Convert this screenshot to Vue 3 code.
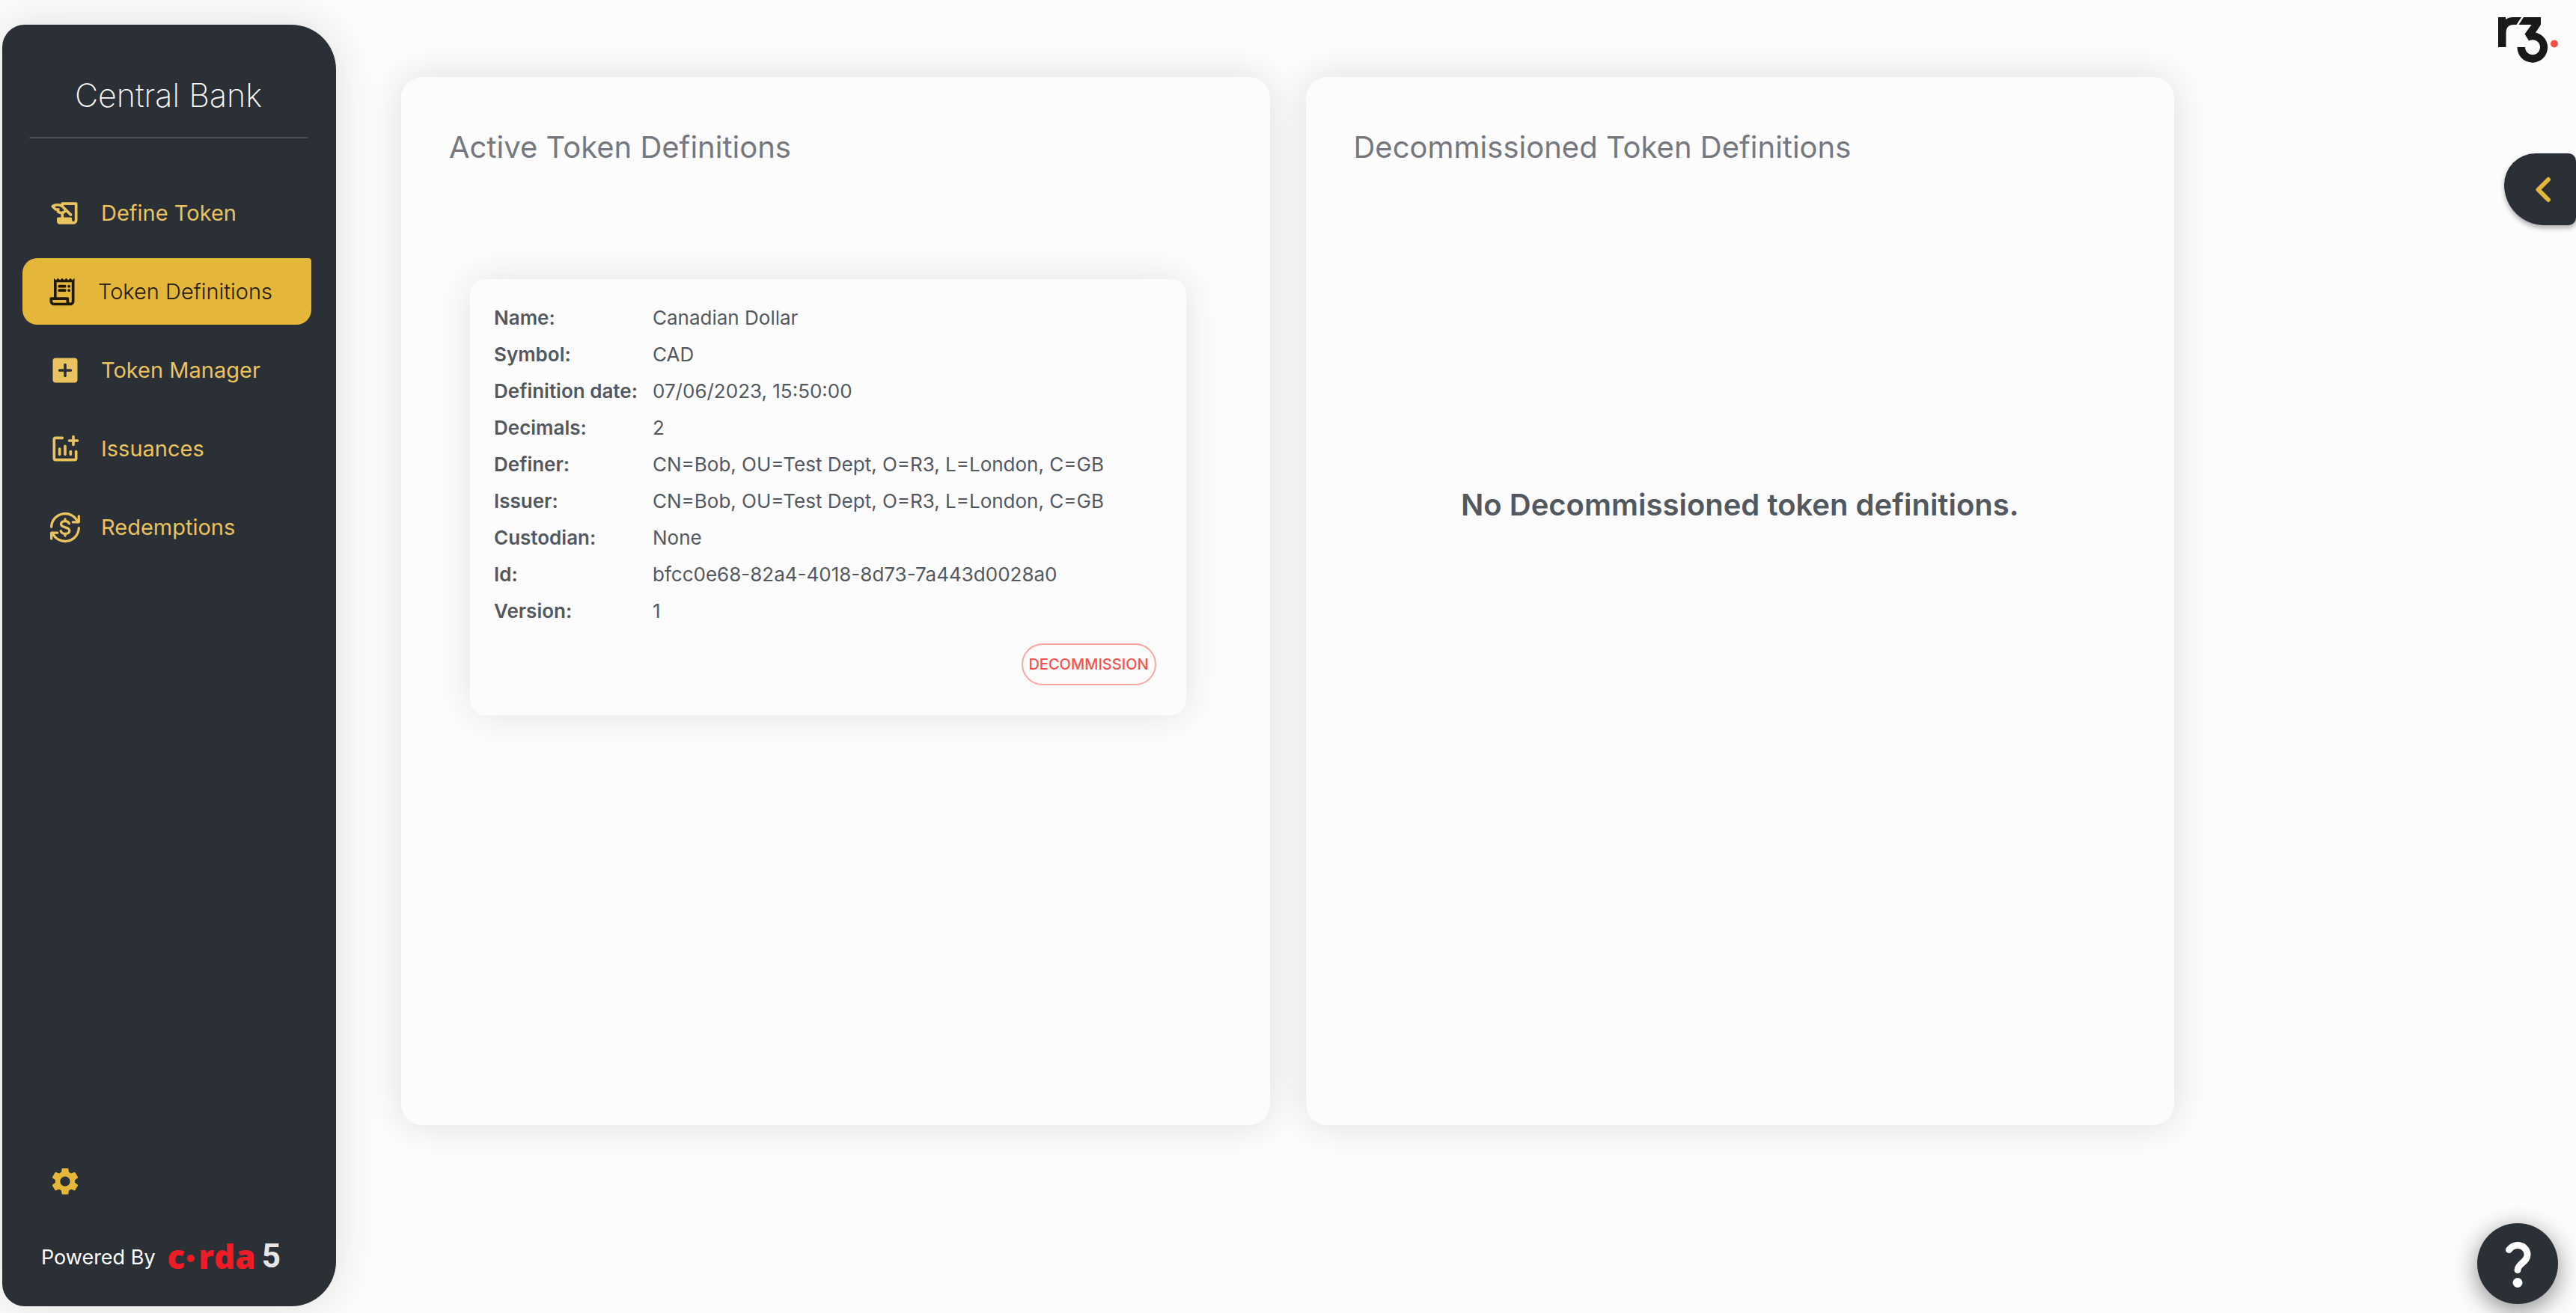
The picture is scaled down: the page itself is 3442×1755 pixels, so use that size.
<script setup>
const navItems = [
  { label: 'Define Token', icon: 'define' },
  { label: 'Token Definitions', icon: 'receipt', active: true },
  { label: 'Token Manager', icon: 'add' },
  { label: 'Issuances', icon: 'chart' },
  { label: 'Redemptions', icon: 'exchange' },
]

const token = [
  ['Name:', 'Canadian Dollar'],
  ['Symbol:', 'CAD'],
  ['Definition date:', '07/06/2023, 15:50:00'],
  ['Decimals:', '2'],
  ['Definer:', 'CN=Bob, OU=Test Dept, O=R3, L=London, C=GB'],
  ['Issuer:', 'CN=Bob, OU=Test Dept, O=R3, L=London, C=GB'],
  ['Custodian:', 'None'],
  ['Id:', 'bfcc0e68-82a4-4018-8d73-7a443d0028a0'],
  ['Version:', '1'],
]
</script>

<template>
  <div class="page">
    <aside class="sidebar">
      <h1 class="brand">Central Bank</h1>
      <nav class="nav">
        <a
          v-for="item in navItems"
          :key="item.label"
          href="#"
          class="nav-link"
          :class="{ active: item.active }"
          :aria-current="item.active ? 'page' : undefined"
        >
          <svg class="icon" viewBox="0 0 24 24" aria-hidden="true">
            <path
              v-if="item.icon === 'define'"
              fill="currentColor"
              d="M9 5v.38c-.83-.33-1.72-.5-2.61-.5-1.42 0-2.84.43-4.05 1.29-.51.36-.58 1.09-.14 1.54l2.57 2.56h1.11v1.11c.86.86 1.98 1.31 3.11 1.36V15H7c-.55 0-1 .45-1 1v2c0 1.1.9 2 2 2h10c1.66 0 3-1.34 3-3V5c0-.55-.45-1-1-1H10c-.55 0-1 .45-1 1zm-1.11 5.41V8.26H5.61L4.57 7.22a5.07 5.07 0 0 1 1.82-.34c1.34 0 2.59.52 3.54 1.46l1.41 1.41-.2.2c-.51.51-1.19.8-1.92.8-.47 0-.93-.12-1.33-.34zM19 17c0 .55-.45 1-1 1s-1-.45-1-1v-1c0-.55-.45-1-1-1h-5v-2.59c.57-.23 1.1-.57 1.56-1.03l.2-.2L15.59 14H17v-1.41l-6-5.97V6h8v11z"
            />
            <g v-else-if="item.icon === 'receipt'" fill="currentColor">
              <path
                d="M19.5 3.5 18 2l-1.5 1.5L15 2l-1.5 1.5L12 2l-1.5 1.5L9 2 7.5 3.5 6 2v14H4c-.55 0-1 .45-1 1v2c0 1.66 1.34 3 3 3h12c1.66 0 3-1.34 3-3V2l-1.5 1.5zM15 20H6c-.55 0-1-.45-1-1v-1h10v2zm4-1c0 .55-.45 1-1 1s-1-.45-1-1v-2c0-.55-.45-1-1-1H8V5h11v14z"
              />
              <rect x="9" y="7" width="6" height="2" rx="1" />
              <rect x="16" y="7" width="2" height="2" rx="1" />
              <rect x="9" y="10" width="6" height="2" rx="1" />
              <rect x="16" y="10" width="2" height="2" rx="1" />
            </g>
            <path
              v-else-if="item.icon === 'add'"
              fill="currentColor"
              d="M19 3H5c-1.11 0-2 .9-2 2v14c0 1.1.89 2 2 2h14c1.1 0 2-.9 2-2V5c0-1.1-.9-2-2-2zm-3 10h-3v3c0 .55-.45 1-1 1s-1-.45-1-1v-3H8c-.55 0-1-.45-1-1s.45-1 1-1h3V8c0-.55.45-1 1-1s1 .45 1 1v3h3c.55 0 1 .45 1 1s-.45 1-1 1z"
            />
            <g
              v-else-if="item.icon === 'chart'"
              fill="none"
              stroke="currentColor"
              stroke-width="2"
              stroke-linecap="round"
            >
              <path d="M10 4H5a1 1 0 0 0-1 1v14a1 1 0 0 0 1 1h14a1 1 0 0 0 1-1v-5" />
              <path d="M8 12v4M12 10v6M16 14v2M18 3v6M15 6h6" />
            </g>
            <g
              v-else
              fill="none"
              stroke="currentColor"
              stroke-width="1.8"
              stroke-linecap="round"
              stroke-linejoin="round"
            >
              <path d="M2 11.6A10 10 0 0 1 21.2 8M22 12.4A10 10 0 0 1 2.8 16" />
              <path d="M22 3.8V8.1H17.6M2 20.2V15.9H6.4" />
              <path
                d="M15 9.2c-.4-1.1-1.5-1.8-3-1.8-1.7 0-3 .9-3 2.2 0 3 6.2 1.7 6.2 4.8 0 1.3-1.4 2.2-3.2 2.2-1.6 0-2.8-.8-3.2-2M12 6v1.2M12 16.8V18"
              />
            </g>
          </svg>
          <span>{{ item.label }}</span>
        </a>
      </nav>
      <div class="sidebar-foot">
        <button type="button" class="settings" aria-label="Settings">
          <svg class="icon" viewBox="0 0 24 24" aria-hidden="true">
            <path
              fill="currentColor"
              d="M19.14 12.94c.04-.3.06-.61.06-.94 0-.32-.02-.64-.07-.94l2.03-1.58c.18-.14.23-.41.12-.61l-1.92-3.32c-.12-.22-.37-.29-.59-.22l-2.39.96c-.5-.38-1.03-.7-1.62-.94l-.36-2.54c-.04-.24-.24-.41-.48-.41h-3.84c-.24 0-.43.17-.47.41l-.36 2.54c-.59.24-1.13.57-1.62.94l-2.39-.96c-.22-.08-.47 0-.59.22L2.74 8.87c-.12.21-.08.47.12.61l2.03 1.58c-.05.3-.09.63-.09.94s.02.64.07.94l-2.03 1.58c-.18.14-.23.41-.12.61l1.92 3.32c.12.22.37.29.59.22l2.39-.96c.5.38 1.03.7 1.62.94l.36 2.54c.05.24.24.41.48.41h3.84c.24 0 .44-.17.47-.41l.36-2.54c.59-.24 1.13-.56 1.62-.94l2.39.96c.22.08.47 0 .59-.22l1.92-3.32c.12-.22.07-.47-.12-.61l-2.01-1.58zM12 15.6c-1.98 0-3.6-1.62-3.6-3.6s1.62-3.6 3.6-3.6 3.6 1.62 3.6 3.6-1.62 3.6-3.6 3.6z"
            />
          </svg>
        </button>
        <p class="powered">
          <span>Powered By</span>
          <span class="corda">
            <span>c</span><i class="corda-dot"></i><span>rda</span><b class="corda-five">5</b>
          </span>
        </p>
      </div>
    </aside>

    <main class="content">
      <section class="panel">
        <h2 class="panel-title">Active Token Definitions</h2>
        <article class="card">
          <table class="details">
            <tbody>
              <tr v-for="[name, value] in token" :key="name">
                <th scope="row">{{ name }}</th>
                <td>{{ value }}</td>
              </tr>
            </tbody>
          </table>
          <button type="button" class="decommission">DECOMMISSION</button>
        </article>
      </section>

      <section class="panel">
        <h2 class="panel-title">Decommissioned Token Definitions</h2>
        <p class="empty">No Decommissioned token definitions.</p>
      </section>
    </main>

    <div class="rail">
      <svg class="logo" viewBox="0 0 80 61" role="img" aria-label="r3">
        <g fill="#191919">
          <path d="M0 0H10V3Q14 0 20 0H31L24.500 10H21Q10.500 10 10.500 21V40H0Z" />
          <path
            d="M34 0H57V10L50 20.500A20.300 20.300 0 1 1 25.500 40H36A10 10 0 1 0 41 31.500L35.500 22.500L44.500 10H27.500Z"
          />
        </g>
        <circle cx="75" cy="35.500" r="5" fill="#f4524a" />
      </svg>
      <button type="button" class="drawer-toggle" aria-label="Open panel">
        <svg viewBox="0 0 96 96" aria-hidden="true">
          <path
            d="M59 35 45.500 48.500 59 62"
            fill="none"
            stroke="#e4b73a"
            stroke-width="6"
            stroke-linecap="round"
            stroke-linejoin="round"
          />
        </svg>
      </button>
      <button type="button" class="help" aria-label="Help">
        <svg viewBox="0 0 108 108" aria-hidden="true">
          <path
            d="M42.500 35.500C45.500 31.500 49 29.500 54 29.500C61 29.500 67 34.500 67 42C67 52 54 54.500 54 62.500"
            fill="none"
            stroke="#fff"
            stroke-width="9"
            stroke-linecap="round"
          />
          <circle cx="54" cy="79.500" r="6.500" fill="#fff" />
        </svg>
      </button>
    </div>
  </div>
</template>

<style>
body {
  margin: 0;
  background: #fcfcfc;
}
</style>

<style scoped>
.page {
  display: flex;
  min-height: 100vh;
  font-family: Inter, "Liberation Sans", sans-serif;
  color: #53585f;
  background: #fcfcfc;
}

h1,
h2,
p {
  margin: 0;
  font-weight: 400;
}

button {
  padding: 0;
  border: 0;
  background: none;
  font-family: inherit;
  cursor: pointer;
}

svg {
  display: block;
}

/* Sidebar */
.sidebar {
  flex: none;
  display: flex;
  flex-direction: column;
  box-sizing: border-box;
  width: 446px;
  margin: 33px 0 9px 3px;
  border-radius: 30px 60px 60px 30px;
  background: #2b2f36;
  box-shadow: 0 0 60px rgba(0, 0, 0, 0.12);
}

.brand {
  margin: 64px 38px 0 36px;
  padding-bottom: 26px;
  border-bottom: 2px solid #4c4e53;
  font-size: 43px;
  line-height: 60px;
  font-weight: 200;
  color: #fff;
  text-align: center;
}

.nav {
  display: flex;
  flex-direction: column;
  gap: 16px;
  margin: 55px 33px 0 27px;
}

.nav-link {
  display: flex;
  align-items: center;
  gap: 26px;
  height: 89px;
  padding-left: 35px;
  border-radius: 20px 4px 20px 20px;
  color: #e9c35f;
  font-size: 29px;
  text-decoration: none;
}

.nav-link.active {
  padding-left: 31px;
  background: #e4b73a;
  color: #1f1906;
  font-weight: 300;
}

.icon {
  flex: none;
  width: 44px;
  height: 44px;
}

.sidebar-foot {
  margin-top: auto;
  padding: 0 52px 39px;
}

.settings {
  display: block;
  margin: 0 0 54px 10px;
  color: #e4b73a;
}

.powered {
  display: flex;
  align-items: center;
  gap: 16px;
  font-size: 27px;
  line-height: 52px;
  color: #fff;
}

.corda {
  display: flex;
  align-items: center;
  margin-bottom: 4px;
  font-family: "Open Sans", "Noto Sans", sans-serif;
  font-size: 44px;
  line-height: 48px;
  font-weight: 800;
  color: #ee1c25;
}

.corda-dot {
  width: 10px;
  height: 10px;
  margin: 6px 5px 0 3px;
  border-radius: 50%;
  background: currentColor;
}

.corda-five {
  margin-left: 8px;
  font-family: Roboto, sans-serif;
  font-size: 44px;
  font-weight: 700;
  color: #e6e6e6;
}

/* Panels */
.content {
  flex: 1;
  display: flex;
  align-items: flex-start;
  gap: 48px;
  padding: 103px 0 0 87px;
}

.panel {
  flex: 1 1 0;
  box-sizing: border-box;
  min-height: calc(100vh - 354px);
  padding: 64px;
  border-radius: 28px;
  background: #fcfcfc;
  box-shadow: 0 0 50px rgba(0, 0, 0, 0.12);
}

.panel-title {
  font-size: 40px;
  line-height: 60px;
  font-weight: 400;
  color: #75797f;
}

.card {
  display: flex;
  flex-direction: column;
  margin: 146px 48px 0 28px;
  padding: 27px 40px 40px 32px;
  border-radius: 20px;
  background: #fcfcfc;
  box-shadow: 0 0 50px rgba(0, 0, 0, 0.1);
}

.details {
  border-collapse: collapse;
  font-size: 26px;
  line-height: 49px;
}

.details th {
  width: 212px;
  padding: 0;
  font-weight: 600;
  text-align: left;
  white-space: nowrap;
}

.details td {
  padding: 0;
  font-weight: 400;
}

.decommission {
  align-self: flex-end;
  box-sizing: border-box;
  width: 180px;
  height: 56px;
  margin-top: 19px;
  border: 2px solid #faa6a2;
  border-radius: 28px;
  font-size: 20px;
  font-weight: 500;
  color: #f4524c;
}

.empty {
  margin-top: 418px;
  font-size: 40px;
  line-height: 60px;
  font-weight: 600;
  text-align: center;
}

/* Right rail */
.rail {
  flex: none;
  display: flex;
  flex-direction: column;
  align-items: flex-end;
  width: 537px;
}

.logo {
  width: 80px;
  height: 61px;
  margin: 23px 24px 0 0;
}

.drawer-toggle {
  width: 96px;
  height: 96px;
  margin-top: 121px;
  border-radius: 42px 10px 10px 54px;
  background: #2b2f36;
  box-shadow: 0 4px 6px rgba(0, 0, 0, 0.3);
}

.help {
  width: 108px;
  height: 108px;
  margin: auto 24px 12px 0;
  border-radius: 50%;
  background: #2b2f36;
  box-shadow: 0 8px 32px rgba(0, 0, 0, 0.45);
}
</style>
